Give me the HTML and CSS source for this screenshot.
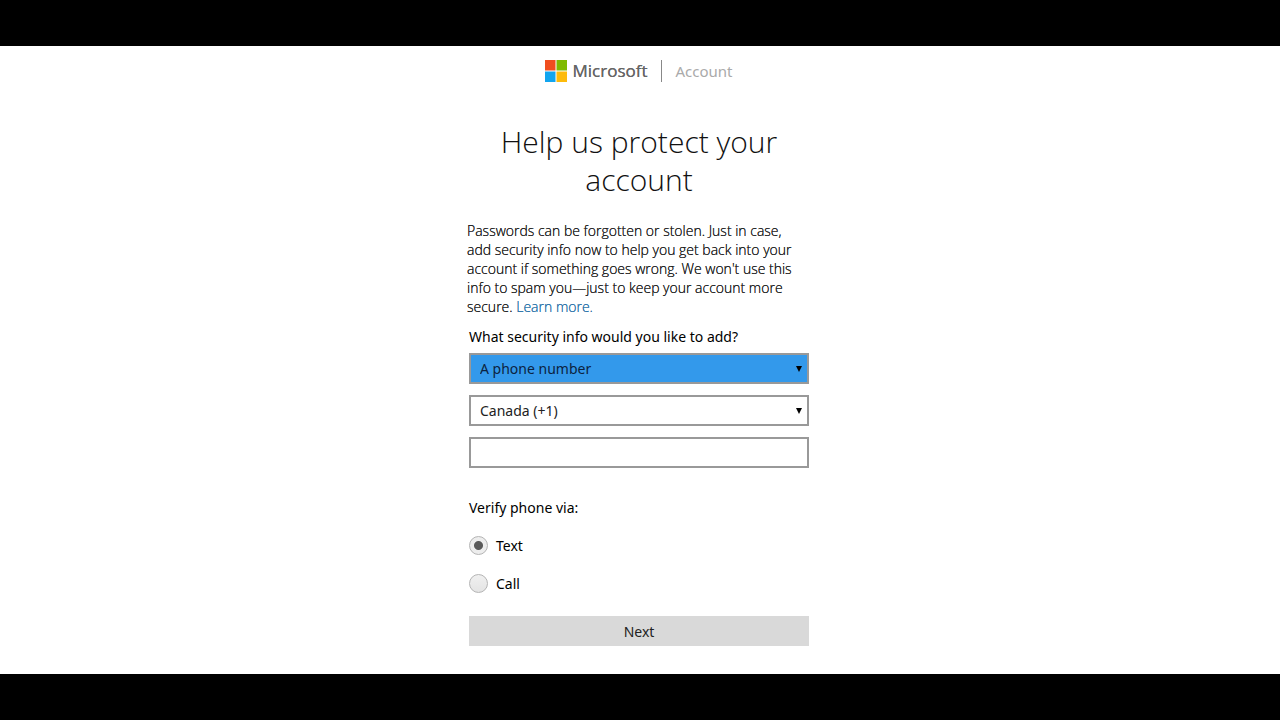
FILE: index.html
```html
<!DOCTYPE html>
<html lang="en">
<head>
<meta charset="utf-8">
<title>Microsoft Account</title>
<link rel="stylesheet" href="styles.css">
</head>
<body>
<main class="page">
  <header class="brand">
    <svg class="logo" viewBox="0 0 22 22" aria-hidden="true"><path fill="#f04e1f" d="M0 0h10.5v10.5H0z"/><path fill="#7fba00" d="M11.5 0H22v10.5H11.5z"/><path fill="#12a5ef" d="M0 11.5h10.5V22H0z"/><path fill="#fdbb0b" d="M11.5 11.5H22V22H11.5z"/></svg>
    <span class="name">Microsoft</span>
    <span class="product">Account</span>
  </header>
  <form class="panel">
    <h1 class="title">Help us protect your account</h1>
    <p class="intro">Passwords can be forgotten or stolen. Just in case,<br>add security info now to help you get back into your<br>account if something goes wrong. We won't use this<br>info to spam you—just to keep your account more<br>secure. <a class="link" href="#">Learn more.</a></p>
    <div class="fields">
      <label class="label" for="kind">What security info would you like to add?</label>
      <div class="picker"><select class="field active" id="kind"><option>A phone number</option></select></div>
      <div class="picker"><select class="field" aria-label="Country code"><option>Canada (+1)</option></select></div>
      <input class="field" type="tel" aria-label="Phone number">
      <fieldset class="verify">
        <legend class="label">Verify phone via:</legend>
        <label class="choice"><input class="radio" type="radio" name="via" checked>Text</label>
        <label class="choice"><input class="radio" type="radio" name="via">Call</label>
      </fieldset>
      <button class="next" type="button">Next</button>
    </div>
  </form>
</main>
</body>
</html>
```
FILE: styles.css
```css
* { box-sizing: border-box; }
body {
  margin: 0;
  min-height: 100vh;
  padding: 46px 0;
  background: #000;
  color: #222;
  font: 14px/19px "Noto Sans", "Open Sans", sans-serif;
}
.page {
  min-height: calc(100vh - 92px);
  padding: 14px 18px 28px 16px;
  background: #fff;
}
.brand { display: flex; justify-content: center; align-items: center; height: 22px; }
.logo { width: 22px; height: 22px; margin-right: 5px; }
.name { color: #666; font: 400 17px/22px "Open Sans", sans-serif; text-shadow: 0 0 0 currentColor; }
.product {
  margin-left: 13px;
  padding-left: 14px;
  border-left: 1px solid #888;
  color: #aaa;
  font-size: 15px;
  line-height: 22px;
}
.panel { max-width: 344px; margin: 41px auto 0; }
.title {
  margin: 0 0 22px;
  padding: 0 24px;
  color: #111;
  font: 300 30px/38px "Open Sans", sans-serif;
  text-align: center;
}
.intro { margin: 0; color: #222; font-family: "Open Sans", sans-serif; font-weight: 300; text-shadow: 0 0 0 currentColor; white-space: nowrap; }
.link { color: #2b74aa; text-decoration: none; }
.fields { display: flex; flex-direction: column; gap: 11px; padding: 11px 2px 0 2px; }
.label { display: block; padding: 0; color: #000; margin-bottom: -4px; }
.picker { position: relative; }
.picker::after {
  content: "";
  position: absolute;
  right: 7px;
  top: 13px;
  border: 3px solid transparent;
  border-top: 6px solid #000;
  pointer-events: none;
}
.field {
  display: block;
  appearance: none;
  width: 100%;
  height: 31px;
  padding: 0 9px;
  border: 2px solid #999;
  border-radius: 0;
  background: #fff;
  color: #222;
  font: inherit;
}
.active { background: #3399eb; color: #0c2340; }
.verify { display: flex; flex-direction: column; gap: 19px; margin: 19px 0 12px; padding: 0; border: 0; }
.verify .label { margin-bottom: 19px; }
.choice { display: flex; align-items: center; gap: 8px; color: #000; }
.radio {
  appearance: none;
  width: 19px;
  height: 19px;
  margin: 0;
  border: 1px solid #b4b4b4;
  border-radius: 50%;
  background: linear-gradient(#f0f0f0, #e4e4e4);
}
.radio:checked { background: radial-gradient(circle, #5a5a5a 4px, #ededed 5px); }
.next { height: 30px; border: 0; background: #d9d9d9; color: #222; font: inherit; }
```
